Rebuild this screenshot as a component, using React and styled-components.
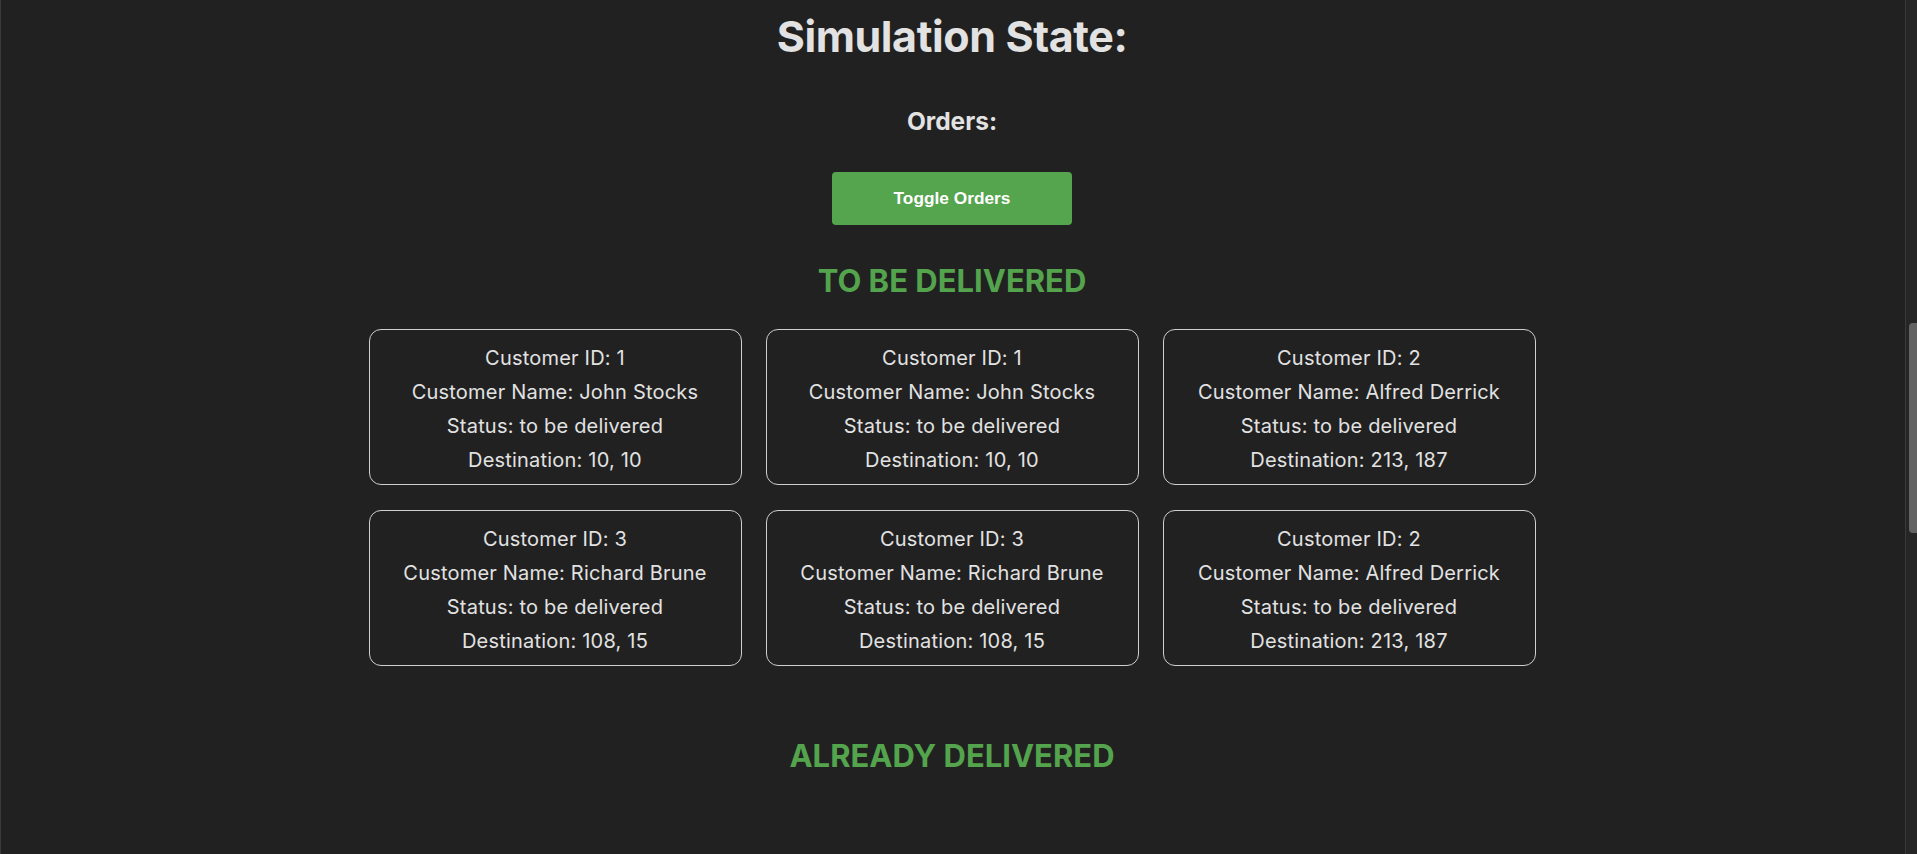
import React from 'react'
import styled, { createGlobalStyle } from 'styled-components'

const GlobalStyle = createGlobalStyle`
  html, body {
    margin: 0;
    padding: 0;
    background: #212121;
  }
  body {
    font-family: Inter, "Noto Sans", sans-serif;
    color: rgba(255, 255, 255, 0.87);
    overflow: hidden;
  }
`

const AppStyled = styled.div`
  display: flex;
  height: 854px;
  border-left: 1px solid #3a3a3a;
  box-sizing: border-box;
`

const Main = styled.main`
  flex: 1;
  display: flex;
  flex-direction: column;
  align-items: center;
  padding: 10px 2px 0 0;
`

const Title = styled.h1`
  margin: 0;
  font-size: 43px;
  line-height: 52px;
  font-weight: 700;
  letter-spacing: -0.4px;
  color: #e2e2e2;
`

const SubTitle = styled.h2`
  margin: 44px 0 0;
  font-size: 24.5px;
  line-height: 30px;
  font-weight: 700;
  color: #e2e2e2;
`

const ToggleButton = styled.button`
  margin-top: 36px;
  width: 240px;
  height: 53px;
  border: none;
  border-radius: 4px;
  background: #55a44e;
  color: #ffffff;
  font-family: "Liberation Sans", Arial, sans-serif;
  font-weight: 700;
  font-size: 17.3px;
  cursor: pointer;
`

const SectionTitle = styled.h2`
  margin: ${(p) => p.$top}px 0 0;
  font-size: 31px;
  line-height: 36px;
  font-weight: 700;
  color: #54a34d;
`

const Grid = styled.div`
  margin-top: 30px;
  display: grid;
  grid-template-columns: repeat(3, 373px);
  column-gap: 24px;
  row-gap: 25px;
`

const Card = styled.div`
  border: 1px solid #cfcfcf;
  border-radius: 12px;
  padding: 11px 0 7px;
  text-align: center;
  font-size: 20px;
  line-height: 34px;
  letter-spacing: 0.2px;
  color: #e2e2e2;
`

const Line = styled.div``

const ScrollRail = styled.div`
  width: 11px;
  border-left: 1px solid #3a3a3a;
  background: #262626;
  display: flex;
  justify-content: flex-end;
`

const Thumb = styled.div`
  margin-top: 323px;
  width: 8px;
  height: 210px;
  border-radius: 4px 0 0 4px;
  background: #636363;
`

const orders = [
  { id: 1, name: 'John Stocks', dest: '10, 10' },
  { id: 1, name: 'John Stocks', dest: '10, 10' },
  { id: 2, name: 'Alfred Derrick', dest: '213, 187' },
  { id: 3, name: 'Richard Brune', dest: '108, 15' },
  { id: 3, name: 'Richard Brune', dest: '108, 15' },
  { id: 2, name: 'Alfred Derrick', dest: '213, 187' },
]

export default function App() {
  return (
    <>
      <GlobalStyle />
      <AppStyled>
        <Main>
          <Title>Simulation State:</Title>
          <SubTitle>Orders:</SubTitle>
          <ToggleButton>Toggle Orders</ToggleButton>
          <SectionTitle $top={38}>TO BE DELIVERED</SectionTitle>
          <Grid>
            {orders.map((o, i) => (
              <Card key={i}>
                <Line>Customer ID: {o.id}</Line>
                <Line>Customer Name: {o.name}</Line>
                <Line>Status: to be delivered</Line>
                <Line>Destination: {o.dest}</Line>
              </Card>
            ))}
          </Grid>
          <SectionTitle $top={72}>ALREADY DELIVERED</SectionTitle>
        </Main>
        <ScrollRail>
          <Thumb />
        </ScrollRail>
      </AppStyled>
    </>
  )
}
